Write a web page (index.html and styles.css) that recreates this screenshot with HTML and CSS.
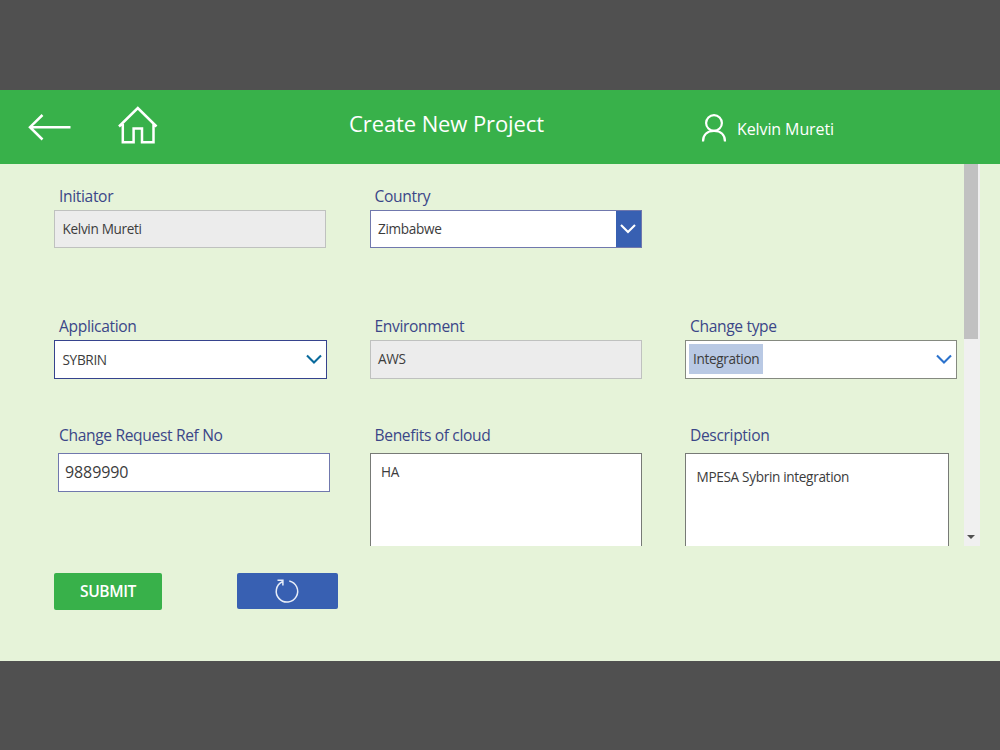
FILE: index.html
```html
<!DOCTYPE html>
<html lang="en">
<head>
    <meta charset="UTF-8">
    <meta name="viewport" content="width=device-width, initial-scale=1.0">
    <title>Create New Project</title>
    <link rel="stylesheet" href="styles.css">
</head>
<body>
    <div class="app">
        <header class="header">
            <svg class="back-icon" width="44" height="28" viewBox="0 0 44 28">
                <path d="M42.500 14.200H2M14.500 2L2 14.200l12.500 12.300"/>
            </svg>
            <svg class="home-icon" width="40" height="40" viewBox="0 0 40 40">
                <path d="M1 21.500L19.800 3l18.700 18.500M4.800 19v18.200h10.800V23.600h8.400v13.600h11.500V19"/>
            </svg>
            <h1 class="title">Create New Project</h1>
            <svg class="user-icon" width="26" height="30" viewBox="0 0 26 30">
                <circle cx="13" cy="10" r="7.900"/>
                <path d="M2 28.500C2 21.500 6.500 17.900 13 17.900S24 21.500 24 28.500"/>
            </svg>
            <span class="user-name">Kelvin Mureti</span>
        </header>

        <main class="content">
            <form class="form-grid">
                <div class="field">
                    <label class="label">Initiator</label>
                    <div class="control disabled">Kelvin Mureti</div>
                </div>
                <div class="field">
                    <label class="label">Country</label>
                    <div class="control country">
                        <span>Zimbabwe</span>
                        <span class="drop-button">
                            <svg class="chevron" width="16" height="10" viewBox="0 0 16 10"><path d="M1 1l7 7 7-7"/></svg>
                        </span>
                    </div>
                </div>
                <div class="field"></div>

                <div class="field">
                    <label class="label">Application</label>
                    <div class="control application">
                        <span>SYBRIN</span>
                        <svg class="chevron" width="16" height="10" viewBox="0 0 16 10"><path d="M1 1.500l7 7 7-7"/></svg>
                    </div>
                </div>
                <div class="field">
                    <label class="label">Environment</label>
                    <div class="control disabled environment">AWS</div>
                </div>
                <div class="field">
                    <label class="label">Change type</label>
                    <div class="control change-type">
                        <span class="tag">Integration</span>
                        <svg class="chevron" width="16" height="10" viewBox="0 0 16 10"><path d="M1 1.500l7 7 7-7"/></svg>
                    </div>
                </div>

                <div class="field">
                    <label class="label">Change Request Ref No</label>
                    <div class="control ref-no">9889990</div>
                </div>
                <div class="field">
                    <label class="label">Benefits of cloud</label>
                    <div class="control area">HA</div>
                </div>
                <div class="field">
                    <label class="label">Description</label>
                    <div class="control area description">MPESA Sybrin integration</div>
                </div>
            </form>

            <div class="scrollbar">
                <div class="scroll-thumb"></div>
                <div class="scroll-arrow"></div>
            </div>
        </main>

        <footer class="actions">
            <button class="btn submit">SUBMIT</button>
            <button class="btn reset" aria-label="Reset">
                <svg class="reload-icon" width="26" height="26" viewBox="0 0 26 26">
                    <path d="M15.300 2.900A10.700 10.700 0 1 1 8.300 3.700M3.500 2.200H8.900V7.600"/>
                </svg>
            </button>
        </footer>
    </div>
</body>
</html>
```

FILE: styles.css
```css
* {
    box-sizing: border-box;
}

body {
    margin: 0;
    background: #505050;
    font-family: "Open Sans", "Noto Sans", sans-serif;
    overflow: hidden;
}

.app {
    height: 571.5px;
    margin-top: 89.5px;
    background: #e6f3d9;
    display: flex;
    flex-direction: column;
}

svg {
    display: block;
    flex: none;
    fill: none;
    stroke: #fff;
    stroke-width: 2.5;
}

.chevron {
    stroke-width: 2.1;
}

.header {
    height: 74.5px;
    flex: none;
    display: flex;
    align-items: center;
    padding-left: 28px;
    background: #38b14a;
    color: #fff;
}

.home-icon {
    margin-left: 46px;
    margin-bottom: 4px;
}

.title {
    width: 196px;
    margin: 0 0 8px 191px;
    font-size: 22px;
    font-weight: 400;
    letter-spacing: -0.1px;
    white-space: nowrap;
}

.user-icon {
    margin: 2px 0 0 156px;
    stroke-width: 2.2;
}

.user-name {
    margin: 4px 0 0 10px;
    font-size: 16px;
    letter-spacing: -0.1px;
}

.content {
    height: 382px;
    flex: none;
    display: flex;
    justify-content: space-between;
    padding: 0 20px 0 54px;
    overflow: hidden;
}

.form-grid {
    height: 382px;
    display: grid;
    grid-template-columns: 272px 272px 272px;
    grid-template-rows: 130px 109.5px 142px;
    column-gap: 43.5px;
    padding-top: 21.5px;
    overflow: hidden;
}

.label {
    display: block;
    height: 24px;
    padding-left: 5px;
    line-height: 20px;
    font-size: 15.6px;
    letter-spacing: -0.35px;
    color: #3b4688;
}

.control {
    height: 38.5px;
    display: flex;
    align-items: center;
    justify-content: space-between;
    padding: 0 4px 0 7.5px;
    border: 1px solid #7078ad;
    background: #fff;
    font-size: 13.6px;
    letter-spacing: -0.33px;
    color: #3c3c3c;
}

.disabled {
    border: 1.5px solid #bfc1bf;
    background: #ececec;
}

.country {
    padding-right: 0;
}

.drop-button {
    width: 25px;
    align-self: stretch;
    display: flex;
    align-items: center;
    justify-content: center;
    background: #3860b2;
}

.application {
    width: 273px;
    height: 39.5px;
    border: 1.5px solid #36438d;
}

.application .chevron {
    stroke: #096a9c;
}

.environment {
    height: 39.5px;
    padding-bottom: 2px;
}

.change-type {
    height: 39px;
    padding-left: 3px;
    border-color: #858a80;
}

.change-type .chevron {
    stroke: #2b72cc;
}

.tag {
    padding: 0 4px;
    line-height: 30px;
    background: #b9c9e4;
}

.ref-no {
    width: 272px;
    margin: 4px 0 0 4px;
    padding-left: 6px;
    font-size: 16px;
    letter-spacing: -0.1px;
}

.area {
    height: 140px;
    margin-top: 4px;
    padding: 8px 10.5px;
    align-items: flex-start;
    border: 1px solid #777a76;
}

.description {
    width: 264px;
    padding-top: 12.5px;
}

.scrollbar {
    width: 16px;
    display: flex;
    flex-direction: column;
    justify-content: space-between;
    background: #f0f0f0;
}

.scroll-thumb {
    width: 14px;
    height: 175px;
    background: #c1c1c1;
}

.scroll-arrow {
    width: 0;
    margin: 0 0 7px 3px;
    border: 4px solid transparent;
    border-top: 4px solid #505050;
    border-bottom: 0;
}

.actions {
    display: flex;
    align-items: flex-start;
    gap: 75px;
    padding: 27px 0 0 54px;
}

.btn {
    height: 36.5px;
    display: flex;
    align-items: center;
    justify-content: center;
    padding: 0;
    border: 0;
    border-radius: 2px;
    color: #fff;
    font-family: inherit;
}

.submit {
    width: 108px;
    background: #38b14a;
    font-size: 15.6px;
    font-weight: 600;
    letter-spacing: -0.4px;
}

.reset {
    width: 101px;
    height: 36px;
    padding-right: 2px;
    background: #3860b2;
}

.reload-icon {
    stroke: #e7edf8;
    stroke-width: 1.5;
}
```
